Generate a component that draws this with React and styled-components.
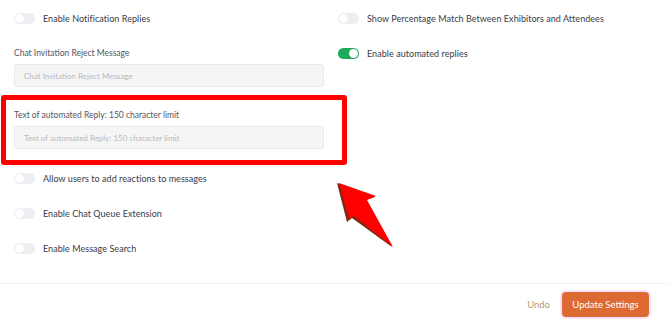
import React, { useState } from "react"
import styled, { createGlobalStyle } from 'styled-components'

const GlobalStyle = createGlobalStyle`
  body {
    margin: 0;
    background: #ffffff;
    font-family: "Lato", "Noto Sans", sans-serif;
    color: #3a3a44;
  }
`

const leftToggles = [
  { key: 'reactions', label: 'Allow users to add reactions to messages' },
  { key: 'queue', label: 'Enable Chat Queue Extension' },
  { key: 'search', label: 'Enable Message Search' },
]

const Toggle = ({ on, onClick }) => (
  <Track on={on} onClick={onClick}>
    <Knob on={on} />
  </Track>
)

const App = () => {
  const [flags, setFlags] = useState({
    notification: false,
    percentage: false,
    automated: true,
    reactions: false,
    queue: false,
    search: false,
  })

  const flip = (key) => setFlags({ ...flags, [key]: !flags[key] })

  return (
    <Page>
      <GlobalStyle />
      <Settings>
        <Column>
          <ToggleRow>
            <Toggle on={flags.notification} onClick={() => flip('notification')} />
            <ToggleLabel>Enable Notification Replies</ToggleLabel>
          </ToggleRow>

          <Field top={22}>
            <FieldLabel>Chat Invitation Reject Message</FieldLabel>
            <TextInput placeholder="Chat Invitation Reject Message" />
          </Field>

          <Highlight>
            <Field>
              <FieldLabel>Text of automated Reply: 150 character limit</FieldLabel>
              <TextInput placeholder="Text of automated Reply: 150 character limit" />
            </Field>
          </Highlight>

          {leftToggles.map(({ key, label }, i) => (
            <ToggleRow key={key} top={i === 0 ? 6 : 21}>
              <Toggle on={flags[key]} onClick={() => flip(key)} />
              <ToggleLabel>{label}</ToggleLabel>
            </ToggleRow>
          ))}
        </Column>

        <Column>
          <ToggleRow>
            <Toggle on={flags.percentage} onClick={() => flip('percentage')} />
            <ToggleLabel>Show Percentage Match Between Exhibitors and Attendees</ToggleLabel>
          </ToggleRow>
          <ToggleRow top={21}>
            <Toggle on={flags.automated} onClick={() => flip('automated')} />
            <ToggleLabel>Enable automated replies</ToggleLabel>
          </ToggleRow>
        </Column>
      </Settings>

      <Footer>
        <UndoButton>Undo</UndoButton>
        <PrimaryButton>Update Settings</PrimaryButton>
      </Footer>

      <Arrow width="64" height="72" viewBox="0 0 64 72">
        <polygon points="0,1 38,15 29,18 55,65 15,36 10,40" fill="#7a2a10" />
        <polygon points="2,1 39,14 30,18 56,65 17,34 12,37" fill="#ff0000" />
      </Arrow>
    </Page>
  )
}

export default App

const Page = styled.div`
  position: relative;
  width: 670px;
  height: 329px;
  overflow: hidden;
`

const Settings = styled.div`
  display: grid;
  grid-template-columns: 310px 1fr;
  column-gap: 14px;
  padding: 11px 0 0 14px;
  height: 283px;
  box-sizing: border-box;
`

const Column = styled.div`
  display: flex;
  flex-direction: column;
`

const ToggleRow = styled.div`
  display: flex;
  align-items: center;
  gap: 8px;
  height: 14px;
  margin-top: ${({ top = 0 }) => top}px;
`

const Track = styled.div`
  width: 21px;
  height: 11px;
  border-radius: 6px;
  background: ${({ on }) => (on ? '#1eaa5a' : '#eceef2')};
  position: relative;
  flex-shrink: 0;
  cursor: pointer;
`

const Knob = styled.div`
  position: absolute;
  top: 1px;
  left: ${({ on }) => (on ? '11px' : '1px')};
  width: 9px;
  height: 9px;
  border-radius: 50%;
  background: #ffffff;
  box-shadow: 0 0 1px rgba(0, 0, 0, 0.08);
`

const ToggleLabel = styled.span`
  font-size: 9px;
  color: #3a3a46;
  letter-spacing: 0.05px;
  white-space: nowrap;
`

const Field = styled.div`
  display: flex;
  flex-direction: column;
  gap: 5px;
  margin-top: ${({ top = 0 }) => top}px;
`

const FieldLabel = styled.label`
  font-size: 8.5px;
  line-height: 12px;
  color: #55555f;
`

const TextInput = styled.input`
  box-sizing: border-box;
  width: 310px;
  height: 23px;
  padding: 0 9px;
  border: 1px solid #e9e9ec;
  border-radius: 3px;
  background: #f5f5f6;
  font-family: "Lato", sans-serif;
  font-size: 8px;
  outline: none;

  &::placeholder {
    color: #b9b9be;
  }
`

const Highlight = styled.div`
  margin: 8px -23px 0 -13px;
  padding: 9px 18px 11px 8px;
  border: 5px solid #ff0000;
  border-radius: 3px;
`

const Footer = styled.div`
  display: flex;
  justify-content: flex-end;
  align-items: center;
  gap: 12px;
  border-top: 1px solid #f3f3f4;
  padding: 8px 21px 0 0;
`

const UndoButton = styled.button`
  border: none;
  background: none;
  padding: 0;
  font-family: "Lato", sans-serif;
  font-size: 9.5px;
  color: #b99a78;
  cursor: pointer;
`

const PrimaryButton = styled.button`
  width: 87px;
  height: 25px;
  border: none;
  border-radius: 4px;
  background: #de6a33;
  color: #ffffff;
  font-family: "Lato", sans-serif;
  font-size: 9.5px;
  cursor: pointer;
  box-shadow: 0 0 0 2px #fbe3fb;
`

const Arrow = styled.svg`
  position: absolute;
  left: 337px;
  top: 182px;
`
